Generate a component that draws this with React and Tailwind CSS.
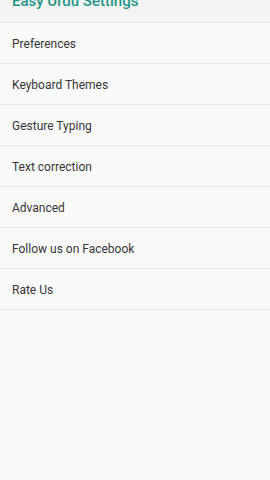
export default function App() {
  const items = [
    "Preferences",
    "Keyboard Themes",
    "Gesture Typing",
    "Text correction",
    "Advanced",
    "Follow us on Facebook",
    "Rate Us",
  ];

  return (
    <div className="h-[480px] w-[270px] overflow-hidden bg-[#fafafa] font-['Roboto',sans-serif]">
      <div className="h-[23px] overflow-hidden border-b border-[#e4e4e4] bg-[#f4f4f4] px-3">
        <p className="-mt-[9px] text-[15px] leading-[20px] font-medium text-[#1b9585]">
          Easy Urdu Settings
        </p>
      </div>
      <ul>
        {items.map((item) => (
          <li
            key={item}
            className="flex h-[41px] items-center border-b border-[#e6e6e6] px-3 pt-[2px] text-[12px] text-[#363636]"
          >
            {item}
          </li>
        ))}
      </ul>
    </div>
  );
}
